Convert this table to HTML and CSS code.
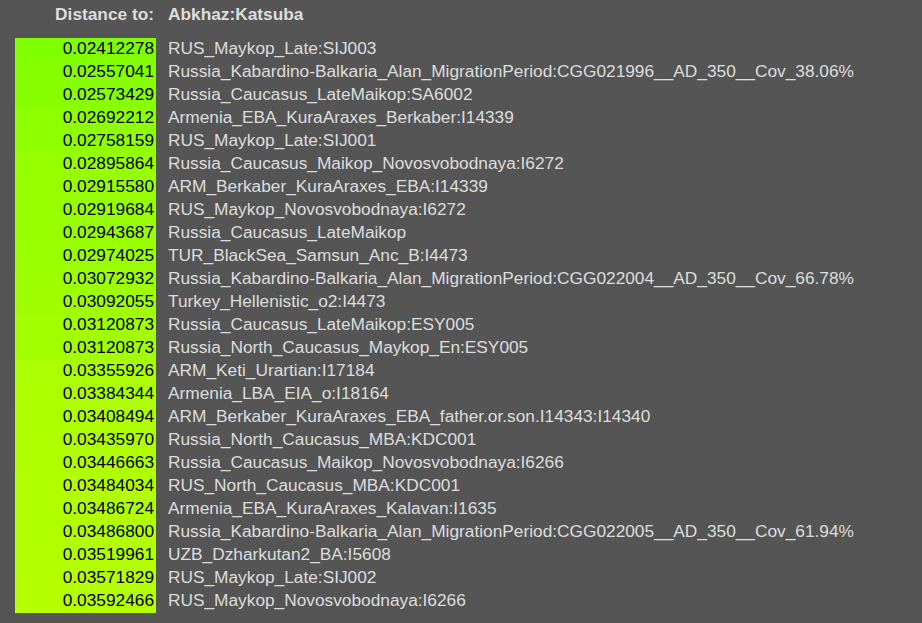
FILE: index.html
```html
<!DOCTYPE html>
<html>
<head>
<meta charset="utf-8">
<link rel="stylesheet" href="styles.css">
</head>
<body>
<table class="dist">
<thead>
<tr><th class="lbl">Distance to:</th><th class="target">Abkhaz:Katsuba</th></tr>
</thead>
<tbody>
<tr><td class="num" style="background:rgb(127,255,0)">0.02412278</td><td class="name">RUS_Maykop_Late:SIJ003</td></tr>
<tr><td class="num" style="background:rgb(134,255,0)">0.02557041</td><td class="name">Russia_Kabardino-Balkaria_Alan_MigrationPeriod:CGG021996__AD_350__Cov_38.06%</td></tr>
<tr><td class="num" style="background:rgb(135,255,0)">0.02573429</td><td class="name">Russia_Caucasus_LateMaikop:SA6002</td></tr>
<tr><td class="num" style="background:rgb(141,255,0)">0.02692212</td><td class="name">Armenia_EBA_KuraAraxes_Berkaber:I14339</td></tr>
<tr><td class="num" style="background:rgb(144,255,0)">0.02758159</td><td class="name">RUS_Maykop_Late:SIJ001</td></tr>
<tr><td class="num" style="background:rgb(150,255,0)">0.02895864</td><td class="name">Russia_Caucasus_Maikop_Novosvobodnaya:I6272</td></tr>
<tr><td class="num" style="background:rgb(151,255,0)">0.02915580</td><td class="name">ARM_Berkaber_KuraAraxes_EBA:I14339</td></tr>
<tr><td class="num" style="background:rgb(151,255,0)">0.02919684</td><td class="name">RUS_Maykop_Novosvobodnaya:I6272</td></tr>
<tr><td class="num" style="background:rgb(152,255,0)">0.02943687</td><td class="name">Russia_Caucasus_LateMaikop</td></tr>
<tr><td class="num" style="background:rgb(154,255,0)">0.02974025</td><td class="name">TUR_BlackSea_Samsun_Anc_B:I4473</td></tr>
<tr><td class="num" style="background:rgb(158,255,0)">0.03072932</td><td class="name">Russia_Kabardino-Balkaria_Alan_MigrationPeriod:CGG022004__AD_350__Cov_66.78%</td></tr>
<tr><td class="num" style="background:rgb(159,255,0)">0.03092055</td><td class="name">Turkey_Hellenistic_o2:I4473</td></tr>
<tr><td class="num" style="background:rgb(161,255,0)">0.03120873</td><td class="name">Russia_Caucasus_LateMaikop:ESY005</td></tr>
<tr><td class="num" style="background:rgb(161,255,0)">0.03120873</td><td class="name">Russia_North_Caucasus_Maykop_En:ESY005</td></tr>
<tr><td class="num" style="background:rgb(172,255,0)">0.03355926</td><td class="name">ARM_Keti_Urartian:I17184</td></tr>
<tr><td class="num" style="background:rgb(173,255,0)">0.03384344</td><td class="name">Armenia_LBA_EIA_o:I18164</td></tr>
<tr><td class="num" style="background:rgb(174,255,0)">0.03408494</td><td class="name">ARM_Berkaber_KuraAraxes_EBA_father.or.son.I14343:I14340</td></tr>
<tr><td class="num" style="background:rgb(175,255,0)">0.03435970</td><td class="name">Russia_North_Caucasus_MBA:KDC001</td></tr>
<tr><td class="num" style="background:rgb(176,255,0)">0.03446663</td><td class="name">Russia_Caucasus_Maikop_Novosvobodnaya:I6266</td></tr>
<tr><td class="num" style="background:rgb(177,255,0)">0.03484034</td><td class="name">RUS_North_Caucasus_MBA:KDC001</td></tr>
<tr><td class="num" style="background:rgb(177,255,0)">0.03486724</td><td class="name">Armenia_EBA_KuraAraxes_Kalavan:I1635</td></tr>
<tr><td class="num" style="background:rgb(177,255,0)">0.03486800</td><td class="name">Russia_Kabardino-Balkaria_Alan_MigrationPeriod:CGG022005__AD_350__Cov_61.94%</td></tr>
<tr><td class="num" style="background:rgb(179,255,0)">0.03519961</td><td class="name">UZB_Dzharkutan2_BA:I5608</td></tr>
<tr><td class="num" style="background:rgb(181,255,0)">0.03571829</td><td class="name">RUS_Maykop_Late:SIJ002</td></tr>
<tr><td class="num" style="background:rgb(182,255,0)">0.03592466</td><td class="name">RUS_Maykop_Novosvobodnaya:I6266</td></tr>
</tbody>
</table>
</body>
</html>
```
FILE: styles.css
```css
html, body {
  margin: 0;
  padding: 0;
  background: #555555;
}
body {
  font-family: "Liberation Sans", Arial, sans-serif;
  font-size: 17.3px;
  color: #dddddd;
}
.dist {
  border-collapse: collapse;
  margin: 3px 0 0 15px;
}
.dist th {
  font-weight: bold;
  height: 23px;
  padding: 0 0 12px 0;
  text-align: left;
  white-space: nowrap;
}
.dist th.lbl {
  text-align: right;
  padding-right: 2px;
}
.dist th.target {
  padding-left: 12px;
}
.dist td {
  height: 23px;
  padding: 0;
  line-height: 20px;
  vertical-align: top;
  white-space: nowrap;
}
.dist td.num {
  width: 139px;
  text-align: right;
  padding-right: 2px;
  color: #000000;
}
.dist td.name {
  padding-left: 12px;
}
```
